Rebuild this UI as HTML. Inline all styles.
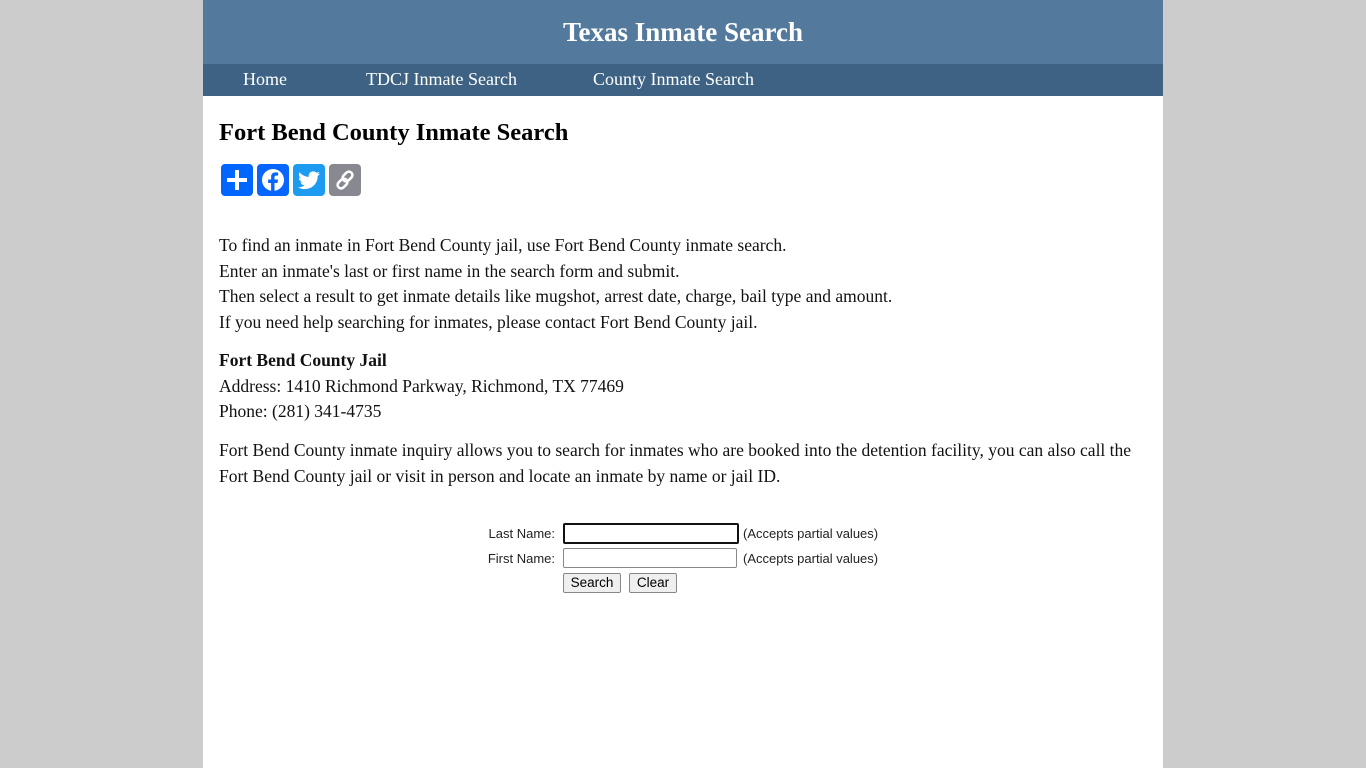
<!DOCTYPE html>
<html><head><meta charset="utf-8"><style>
body{margin:0;background:#ccc;font-family:"Liberation Serif",serif;}
#w{position:absolute;left:203px;top:0;width:960px;height:768px;background:#fff;}
#hd{height:64px;background:#53799d;color:#fff;text-align:center;font-weight:bold;font-size:27px;line-height:64px;}
#nav{height:32px;background:#3d6283;position:relative;color:#fff;font-size:18px;}
#nav span{position:absolute;top:5px;}
#c{padding:0 16px;font-size:17.5px;color:#111;}
h1{font-size:24.5px;margin:0;position:absolute;top:119px;left:16px;}
.ic{position:absolute;top:164px;width:32px;height:32px;border-radius:4px;}
p{margin:0;line-height:25.7px;position:absolute;left:16px;white-space:nowrap;}
.f{font-family:"Liberation Sans",sans-serif;font-size:13px;color:#222;position:absolute;top:0;}
.in{position:absolute;width:172px;height:18px;border:1px solid #888;border-radius:2px;}
.bt{position:absolute;height:18px;border:1px solid #888;border-radius:2px;background:#efefef;font-family:"Liberation Sans",sans-serif;font-size:13.5px;line-height:18px;text-align:center;}
</style></head><body><div id="w">
<div id="hd">Texas Inmate Search</div>
<div id="nav"><span style="left:40px">Home</span><span style="left:163px">TDCJ Inmate Search</span><span style="left:390px">County Inmate Search</span></div>
<h1>Fort Bend County Inmate Search</h1>
<svg class="ic" style="left:18px;background:#0166ff" viewBox="0 0 32 32"><path d="M16 6v20M6 16h20" stroke="#fff" stroke-width="4"/></svg>
<svg class="ic" style="left:54px;background:#0866ff" viewBox="0 0 32 32"><circle cx="16" cy="16" r="11" fill="#fff"/><path d="M17.5 28v-9h3l.5-3.5h-3.5v-2.2c0-1 .3-1.7 1.8-1.7h1.8V8.5c-.3 0-1.4-.1-2.6-.1-2.6 0-4.4 1.6-4.4 4.5v2.6h-3V19h3v9z" fill="#0866ff"/></svg>
<svg class="ic" style="left:90px;background:#1d9bf0" viewBox="0 0 32 32"><path d="M27 9.5c-.8.4-1.7.6-2.6.7.9-.6 1.6-1.4 2-2.5-.9.5-1.900.9-2.9 1.1a4.5 4.5 0 0 0-7.7 4.1c-3.7-.2-7-2-9.300-4.700-1.200 2.100-.6 4.700 1.400 6-.7 0-1.400-.2-2-.6 0 2.200 1.600 4.100 3.600 4.500-.7.2-1.400.2-2 .1.6 1.800 2.300 3.100 4.200 3.100A9 9 0 0 1 5 23.100 12.800 12.800 0 0 0 24.700 12c.9-.6 1.700-1.500 2.300-2.500z" fill="#fff"/></svg>
<svg class="ic" style="left:126px;background:#888990" viewBox="0 0 32 32"><g fill="none" stroke="#fff" stroke-width="2.5"><rect x="15" y="7" width="7" height="11" rx="3.5" transform="rotate(45 18.5 12.5)"/><rect x="10" y="14" width="7" height="11" rx="3.5" transform="rotate(45 13.5 19.5)"/></g></svg>
<div id="c">
<p style="top:233px">To find an inmate in Fort Bend County jail, use Fort Bend County inmate search.<br>Enter an inmate's last or first name in the search form and submit.<br>Then select a result to get inmate details like mugshot, arrest date, charge, bail type and amount.<br>If you need help searching for inmates, please contact Fort Bend County jail.</p>
<p style="top:348px"><b>Fort Bend County Jail</b><br>Address: 1410 Richmond Parkway, Richmond, TX 77469<br>Phone: (281) 341-4735</p>
<p style="top:438px">Fort Bend County inmate inquiry allows you to search for inmates who are booked into the detention facility, you can also call the<br>Fort Bend County jail or visit in person and locate an inmate by name or jail ID.</p>
</div>
<div style="position:absolute;top:526px;left:0;width:352px;height:40px">
<div class="f" style="right:0;top:0">Last Name:</div>
<div class="f" style="right:0;top:25px">First Name:</div>
</div>
<div class="in" style="left:360px;top:523px;border:2px solid #111;width:172px;height:17px"></div>
<div class="f" style="left:540px;top:526px">(Accepts partial values)</div>
<div class="in" style="left:360px;top:548px"></div>
<div class="f" style="left:540px;top:551px">(Accepts partial values)</div>
<div class="bt" style="left:360px;top:573px;width:56px">Search</div>
<div class="bt" style="left:426px;top:573px;width:46px">Clear</div>
</div></body></html>
